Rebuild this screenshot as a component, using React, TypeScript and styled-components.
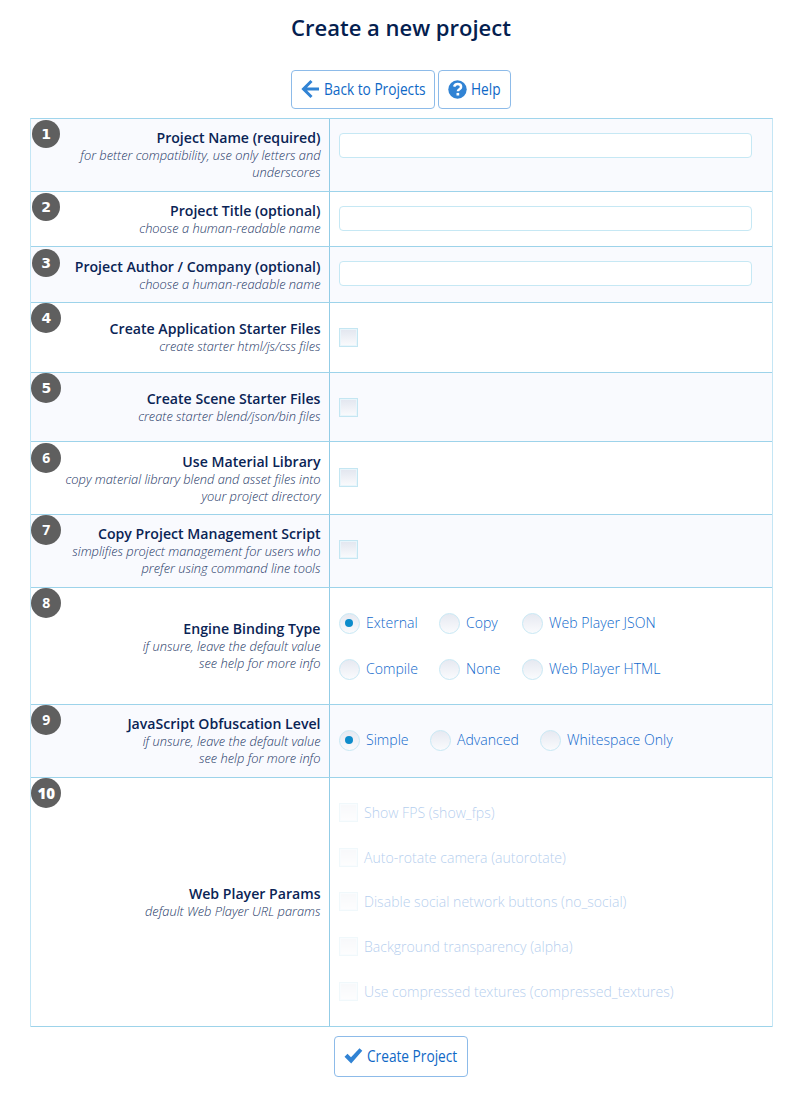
import React from "react";
import styled, { createGlobalStyle } from "styled-components";

const GlobalStyle = createGlobalStyle`
  *, *::before, *::after { box-sizing: border-box; }
  body {
    margin: 0;
    background: #fff;
    font-family: "Open Sans", "Noto Sans", sans-serif;
    color: #0a2455;
  }
`;

const Page = styled.main`
  display: flex;
  flex-direction: column;
  align-items: flex-start;
  width: 800px;
  height: 1096px;
  padding: 11px 0 0 30px;
`;

const Heading = styled.h1`
  width: 742px;
  margin: 0;
  text-align: center;
  font-size: 22px;
  line-height: 32px;
  font-weight: 600;
  color: #04204f;
`;

const Toolbar = styled.nav`
  display: flex;
  justify-content: center;
  gap: 3px;
  width: 742px;
  margin-top: 27px;
`;

const Button = styled.button<{ $width: number; $height?: number }>`
  display: flex;
  align-items: center;
  flex: none;
  width: ${(p) => p.$width}px;
  height: ${(p) => p.$height ?? 39}px;
  padding: 0 0 1px 9px;
  gap: 4px;
  border: 1px solid #8dbbe9;
  border-radius: 4px;
  background: #fff;
  color: #0f68c6;
  font-family: inherit;
  font-size: 16px;
  line-height: 20px;
  white-space: nowrap;

  svg { flex: none; }
`;

const ButtonText = styled.span`
  display: block;
  transform: scaleX(0.855);
  transform-origin: left center;
`;

const Table = styled.section`
  width: 743px;
  margin-top: 9px;
  border: 1px solid #a0d5ec;
  border-left-color: #c4e6f5;
  border-right-color: #c4e6f5;
  border-bottom: 0;
`;

const Row = styled.div<{ $height: number; $tinted?: boolean }>`
  display: grid;
  grid-template-columns: 299px 1fr;
  height: ${(p) => p.$height}px;
  border-bottom: 1px solid #9dd3ea;
  background: ${(p) => (p.$tinted ? "#f9fafe" : "#fff")};
`;

const LabelCell = styled.div<{ $shift: number }>`
  position: relative;
  display: flex;
  flex-direction: column;
  justify-content: center;
  align-items: flex-end;
  padding: ${(p) => p.$shift}px 8.5px 0 0;
  border-right: 1px solid #93cce6;
  text-align: right;
`;

const Badge = styled.span<{ $size: number; $top: number; $sans?: boolean; $wide?: boolean }>`
  position: absolute;
  top: ${(p) => p.$top}px;
  left: ${(p) => (p.$size === 28 ? 1 : 0.3)}px;
  display: flex;
  align-items: center;
  justify-content: center;
  width: ${(p) => p.$size}px;
  height: ${(p) => p.$size}px;
  border-radius: 50%;
  background: #5f5f5f;
  color: #fff;
  font: ${(p) => (p.$wide ? "800 15px/20px" : "700 14px/20px")}
    ${(p) => (p.$sans ? '"Open Sans"' : '"DejaVu Sans"')}, sans-serif;
`;

const Title = styled.div`
  font-size: 14.12px;
  line-height: 18px;
  font-weight: 600;
  white-space: nowrap;
`;

const Hint = styled.div`
  font-size: 12.84px;
  line-height: 17.2px;
  font-style: italic;
  font-weight: 300;
  color: #1d3766;
  white-space: nowrap;
`;

const ControlCell = styled.div<{ $top: number }>`
  padding: ${(p) => p.$top}px 0 0 9px;
`;

const TextInput = styled.input`
  display: block;
  width: 413px;
  height: 25px;
  padding: 0 8px;
  border: 1px solid #c6e8f4;
  border-radius: 4px;
  outline: none;
  background: #fff;
`;

const Check = styled.span`
  display: block;
  flex: none;
  width: 19px;
  height: 19px;
  border: 1px solid #c4e6f2;
  box-shadow: inset 0 0 0 1px #e9f5fb;
  background: linear-gradient(#e2e6ef, #fafbfd);
`;

const RadioGrid = styled.div<{ $columns: string }>`
  display: grid;
  grid-template-columns: ${(p) => p.$columns};
  grid-auto-rows: 21px;
  row-gap: 24.6px;
`;

const Option = styled.div`
  display: flex;
  align-items: center;
  gap: 6px;
  height: 21px;
  font-size: 14.08px;
  font-weight: 300;
  line-height: 20px;
  color: #1169cc;
  white-space: nowrap;
`;

const OptionText = styled.span`
  padding-bottom: 1px;
`;

const RadioDot = styled.span<{ $on?: boolean }>`
  flex: none;
  display: flex;
  align-items: center;
  justify-content: center;
  width: 21px;
  height: 21px;
  border: 1px solid #c8e8f4;
  border-radius: 50%;
  background: linear-gradient(#e6e9f1, #fafbfd);

  &::after {
    content: "";
    width: 8px;
    height: 8px;
    margin: 0 1px 1px 0;
    border-radius: 50%;
    background: ${(p) => (p.$on ? "#0d8ccb" : "transparent")};
  }
`;

const ParamList = styled.div`
  display: flex;
  flex-direction: column;
  gap: 23.7px;
  opacity: 0.32;

  ${Check} {
    margin-bottom: 1px;
    opacity: 0.75;
  }
`;

const Footer = styled.footer`
  display: flex;
  justify-content: center;
  width: 742px;
  margin-top: 9px;
`;

const BackIcon = () => (
  <svg width="19" height="20" viewBox="0 0 19 20" fill="none" stroke="#3183d4" strokeWidth="3">
    <path d="M10.5 2 2.5 10l8 8M2.5 10H18" />
  </svg>
);

const HelpIcon = () => (
  <svg width="19" height="19" viewBox="0 0 19 19" fill="none">
    <circle cx="9.5" cy="9.5" r="9.2" fill="#3183d4" />
    <path d="M6.1 6.7C6.7 5 8 4.1 9.7 4.1c2 0 3.4 1.1 3.4 2.8 0 2.4-3.2 2.3-3.2 4.4" stroke="#fff" strokeWidth="2.5" />
    <path d="M8.5 12.9h2.7v2.6H8.5z" fill="#fff" />
  </svg>
);

const CheckIcon = () => (
  <svg width="19" height="16" viewBox="0 0 19 16">
    <path fill="#3183d4" d="M.5 8.8l3-3L7 9.3 15.5.3l2.8 2.5L7.2 15.5z" />
  </svg>
);

type Item = {
  height: number;
  title: string;
  hints: string[];
  top: number;
  shift?: number;
  badgeTop?: number;
  control: React.ReactNode;
};

const radios = (names: string[]) =>
  names.map((name, i) => (
    <Option key={name}>
      <RadioDot $on={i === 0} />
      <OptionText>{name}</OptionText>
    </Option>
  ));

const params = [
  "Show FPS (show_fps)",
  "Auto-rotate camera (autorotate)",
  "Disable social network buttons (no_social)",
  "Background transparency (alpha)",
  "Use compressed textures (compressed_textures)",
];

const items: Item[] = [
  { height: 73, title: "Project Name (required)", hints: ["for better compatibility, use only letters and", "underscores"], top: 14, badgeTop: 1, control: <TextInput /> },
  { height: 55, title: "Project Title (optional)", hints: ["choose a human-readable name"], top: 14, shift: 1.5, badgeTop: 1, control: <TextInput /> },
  { height: 56, title: "Project Author / Company (optional)", hints: ["choose a human-readable name"], top: 14, shift: 2.5, badgeTop: 2, control: <TextInput /> },
  { height: 70, title: "Create Application Starter Files", hints: ["create starter html/js/css files"], top: 25, control: <Check /> },
  { height: 69, title: "Create Scene Starter Files", hints: ["create starter blend/json/bin files"], top: 25, shift: 1.5, control: <Check /> },
  { height: 73, title: "Use Material Library", hints: ["copy material library blend and asset files into", "your project directory"], top: 26, shift: 2.2, badgeTop: 1, control: <Check /> },
  { height: 73, title: "Copy Project Management Script", hints: ["simplifies project management for users who", "prefer using command line tools"], top: 25, control: <Check /> },
  {
    height: 117,
    title: "Engine Binding Type",
    hints: ["if unsure, leave the default value", "see help for more info"],
    top: 25,
    control: (
      <RadioGrid $columns="100px 83px 1fr">
        {radios(["External", "Copy", "Web Player JSON", "Compile", "None", "Web Player HTML"])}
      </RadioGrid>
    ),
  },
  {
    height: 73,
    title: "JavaScript Obfuscation Level",
    hints: ["if unsure, leave the default value", "see help for more info"],
    top: 25,
    badgeTop: -0.4,
    control: <RadioGrid $columns="91px 110px 1fr">{radios(["Simple", "Advanced", "Whitespace Only"])}</RadioGrid>,
  },
  {
    height: 249,
    title: "Web Player Params",
    hints: ["default Web Player URL params"],
    top: 24.5,
    shift: 1.5,
    badgeTop: -0.4,
    control: (
      <ParamList>
        {params.map((name) => (
          <Option key={name}>
            <Check />
            <span>{name}</span>
          </Option>
        ))}
      </ParamList>
    ),
  },
];

export default function App() {
  return (
    <>
      <GlobalStyle />
      <Page>
        <Heading>Create a new project</Heading>
        <Toolbar>
          <Button $width={144}>
            <BackIcon />
            <ButtonText>Back to Projects</ButtonText>
          </Button>
          <Button $width={73}>
            <HelpIcon />
            <ButtonText>Help</ButtonText>
          </Button>
        </Toolbar>
        <Table>
          {items.map((item, i) => (
            <Row key={item.title} $height={item.height} $tinted={i % 2 === 0}>
              <LabelCell $shift={item.shift ?? 0.5}>
                <Badge $size={i < 3 ? 28 : 30} $top={item.badgeTop ?? 0} $sans={i > 4} $wide={i === 9}>
                  {i + 1}
                </Badge>
                <Title>{item.title}</Title>
                {item.hints.map((hint) => (
                  <Hint key={hint}>{hint}</Hint>
                ))}
              </LabelCell>
              <ControlCell $top={item.top}>{item.control}</ControlCell>
            </Row>
          ))}
        </Table>
        <Footer>
          <Button $width={134} $height={41}>
            <CheckIcon />
            <ButtonText>Create Project</ButtonText>
          </Button>
        </Footer>
      </Page>
    </>
  );
}
